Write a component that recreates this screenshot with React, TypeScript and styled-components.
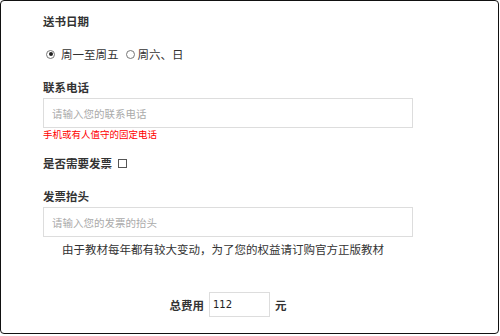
import React from 'react';
import styled, { createGlobalStyle } from 'styled-components';

const GlobalStyle = createGlobalStyle`
  html, body {
    margin: 0;
    padding: 0;
    background: #fff;
  }
  body {
    font-family: "Microsoft YaHei", "Noto Sans CJK SC", sans-serif;
    color: #333;
  }
`;

const Frame = styled.div`
  box-sizing: border-box;
  width: 499px;
  height: 334px;
  border: 1px solid #111;
  border-radius: 4px;
  padding: 9px 0 0 42px;
  overflow: hidden;
`;

const Form = styled.form`
  width: 370px;
  display: flex;
  flex-direction: column;
`;

const Label = styled.div<{ $top?: number }>`
  font-size: 11.5px;
  font-weight: bold;
  line-height: 20px;
  height: 20px;
  margin-top: ${(p) => p.$top ?? 0}px;
  display: flex;
  align-items: center;
`;

const RadioRow = styled.div`
  display: flex;
  align-items: center;
  height: 20px;
  margin-top: 13px;
  padding-left: 3px;
  font-size: 11.5px;
`;

const RadioOption = styled.label<{ $gap: number }>`
  display: flex;
  align-items: center;
  gap: ${(p) => p.$gap}px;
  cursor: pointer;
  margin-right: 7px;
`;

const Radio = styled.input.attrs({ type: 'radio' })`
  appearance: none;
  box-sizing: border-box;
  width: 9px;
  height: 9px;
  margin: 0;
  border: 1px solid #777;
  border-radius: 50%;
  background: #fff;
  display: grid;
  place-items: center;
  &:checked::after {
    content: '';
    width: 4px;
    height: 4px;
    border-radius: 50%;
    background: #222;
  }
`;

const TextInput = styled.input`
  box-sizing: border-box;
  width: 370px;
  height: 30px;
  margin-top: 1px;
  padding: 0 8px;
  border: 1px solid #ddd;
  outline: none;
  font-family: inherit;
  font-size: 10.5px;
  color: #333;
  &::placeholder {
    color: #aaa;
  }
`;

const Hint = styled.div`
  font-size: 9.5px;
  line-height: 12px;
  height: 12px;
  color: #f00;
`;

const Checkbox = styled.input.attrs({ type: 'checkbox' })`
  appearance: none;
  box-sizing: border-box;
  width: 9px;
  height: 9px;
  margin: 0 0 0 6px;
  border: 1px solid #555;
  background: #fff;
`;

const Notice = styled.p`
  margin: 2px 0 0;
  padding-left: 19px;
  font-size: 11.5px;
  line-height: 20px;
  white-space: nowrap;
`;

const TotalRow = styled.div`
  margin-top: 33px;
  display: flex;
  align-items: center;
  justify-content: center;
  gap: 5px;
  font-size: 11.5px;
  font-weight: bold;
`;

const TotalInput = styled.input`
  box-sizing: border-box;
  width: 61px;
  height: 25px;
  padding: 0 3px;
  border: 1px solid #ddd;
  outline: none;
  font-family: "DejaVu Sans", "Liberation Sans", sans-serif;
  font-size: 10px;
  color: #222;
`;

const App = () => (
  <>
    <GlobalStyle />
    <Frame>
      <Form onSubmit={(e) => e.preventDefault()}>
        <Label $top={1}>送书日期</Label>
        <RadioRow>
          <RadioOption $gap={6}>
            <Radio name='day' defaultChecked />
            周一至周五
          </RadioOption>
          <RadioOption $gap={3}>
            <Radio name='day' />
            周六、日
          </RadioOption>
        </RadioRow>
        <Label $top={13}>联系电话</Label>
        <TextInput placeholder='请输入您的联系电话' />
        <Hint>手机或有人值守的固定电话</Hint>
        <Label $top={13}>
          是否需要发票
          <Checkbox />
        </Label>
        <Label $top={13}>发票抬头</Label>
        <TextInput placeholder='请输入您的发票的抬头' />
        <Notice>由于教材每年都有较大变动，为了您的权益请订购官方正版教材</Notice>
        <TotalRow>
          总费用
          <TotalInput defaultValue='112' />
          元
        </TotalRow>
      </Form>
    </Frame>
  </>
);

export default App;
